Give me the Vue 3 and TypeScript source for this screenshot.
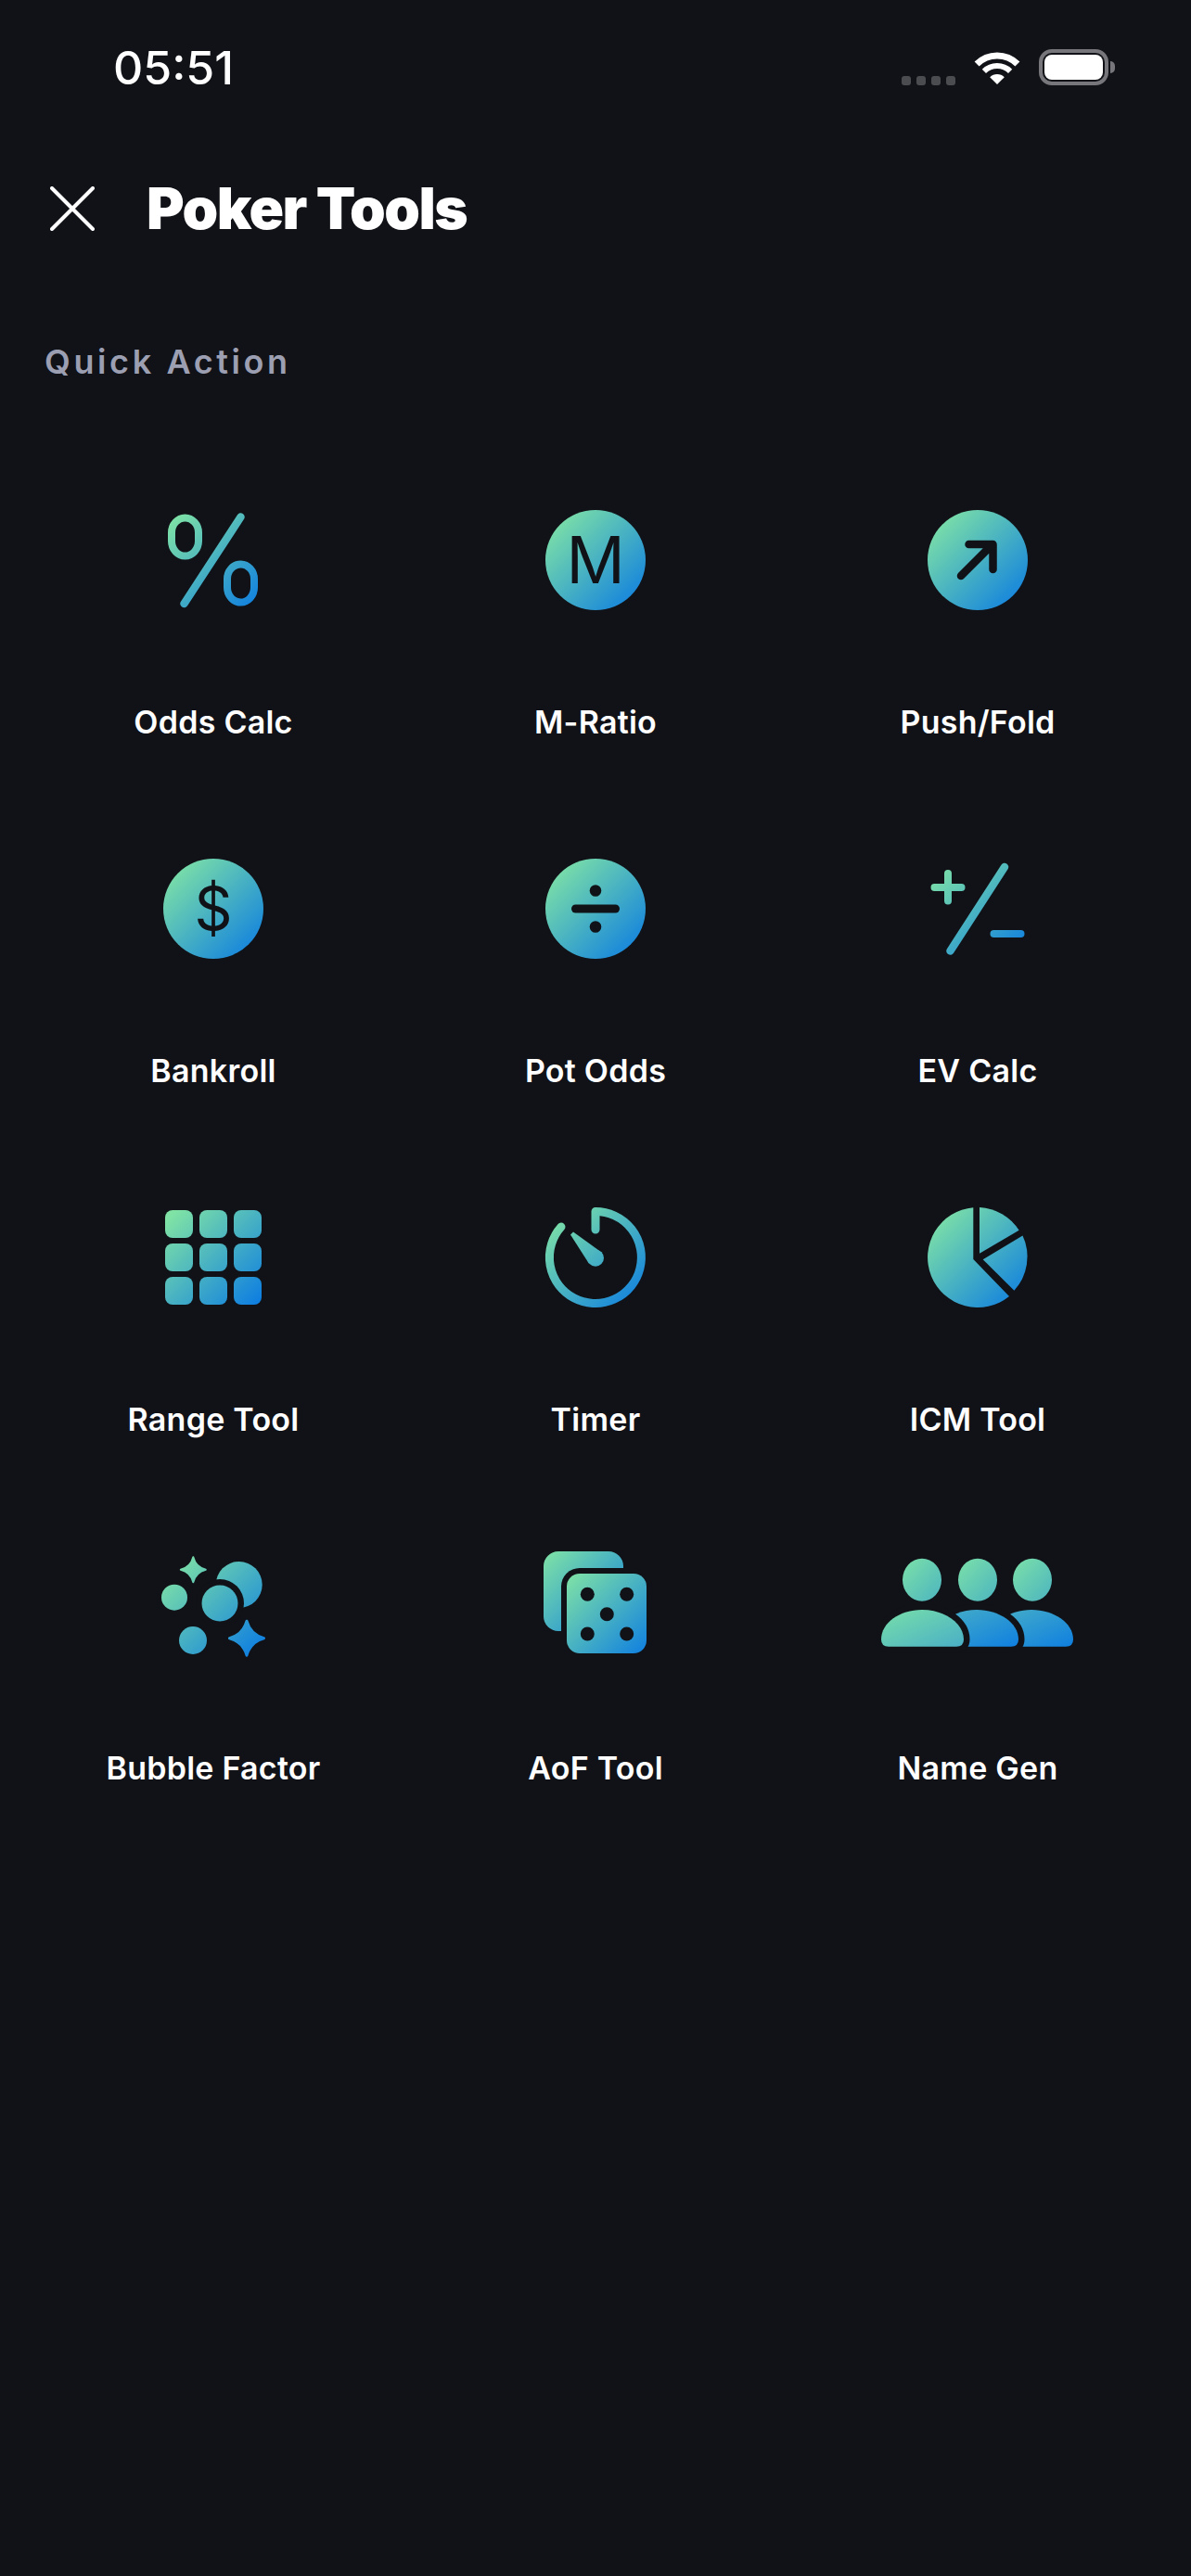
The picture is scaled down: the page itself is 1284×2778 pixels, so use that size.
<script setup lang="ts">
const bg = '#101217'
const dots = [0, 1, 2, 3]
const rangeCells = [0, 1, 2].flatMap(r => [0, 1, 2].map(c => ({ x: -52 + c * 37, y: -51 + r * 36 })))
const diceDots = [[-8.7, -12.7], [33.7, -12.7], [12.3, 8.7], [-8.7, 30], [33.7, 30]]
const body = 'M-96 43.7Q-104 43.7-104 36C-104 18-84 4-60 4C-36 4-15 18-15 36Q-15 43.7-23 43.7Z'
</script>

<template>
  <div class="page">
    <!-- shared gradients, coordinates are relative to each icon's centre -->
    <svg class="defs" width="0" height="0">
      <defs>
        <linearGradient id="g" gradientUnits="userSpaceOnUse" x1="-46" y1="-46" x2="48" y2="48">
          <stop offset="0" stop-color="#80e3a5" />
          <stop offset="1" stop-color="#0f7fe0" />
        </linearGradient>
        <linearGradient id="g-back" gradientUnits="userSpaceOnUse" x1="-56" y1="-59" x2="30" y2="27">
          <stop offset="0" stop-color="#80e3a5" />
          <stop offset="1" stop-color="#0f7fe0" />
        </linearGradient>
        <linearGradient id="g-front" gradientUnits="userSpaceOnUse" x1="-31" y1="-35" x2="55" y2="51">
          <stop offset="0" stop-color="#80e3a5" />
          <stop offset="1" stop-color="#0f7fe0" />
        </linearGradient>
        <linearGradient id="g-head" x1="0" y1="0" x2="1" y2="1">
          <stop offset="0" stop-color="#7ce1a8" />
          <stop offset="1" stop-color="#4cb4c0" />
        </linearGradient>
        <linearGradient id="g-body" x1="0" y1="0" x2="1" y2="1">
          <stop offset="0" stop-color="#78dfa9" />
          <stop offset="1" stop-color="#4aafc6" />
        </linearGradient>
        <linearGradient id="g-body2" x1="0" y1="0" x2="1" y2="1">
          <stop offset="0" stop-color="#48b0c6" />
          <stop offset="1" stop-color="#0f7fe0" />
        </linearGradient>
      </defs>
    </svg>

    <div class="status">
      <span class="time">05:51</span>
      <div class="status-icons">
        <div class="signal">
          <i v-for="d in dots" :key="d" />
        </div>
        <svg class="wifi" width="52" height="38" viewBox="0 0 52 38">
          <path d="M4.1 15.1A31 31 0 0 1 47.9 15.1" fill="none" stroke="#fff" stroke-width="7" />
          <path d="M11.9 22.9A20 20 0 0 1 40.1 22.9" fill="none" stroke="#fff" stroke-width="6" />
          <path d="M26 37L18.2 29.2A11 11 0 0 1 33.8 29.2Z" fill="#fff" />
        </svg>
        <div class="battery">
          <div class="battery-fill" />
        </div>
        <div class="battery-nub" />
      </div>
    </div>

    <div class="header">
      <svg width="48" height="48" viewBox="0 0 48 48">
        <path d="M2 2L46 46M46 2L2 46" fill="none" stroke="#fff" stroke-width="4" stroke-linecap="round" />
      </svg>
      <h1 class="title">Poker Tools</h1>
    </div>

    <div class="section">Quick Action</div>

    <div class="grid">
      <div class="tool">
        <svg class="icon" viewBox="-105 -65 210 130">
          <rect x="-45" y="-45.5" width="29" height="41" rx="14.5" ry="16" fill="none" stroke="url(#g)" stroke-width="8" />
          <rect x="15" y="4.5" width="29" height="41" rx="14.5" ry="16" fill="none" stroke="url(#g)" stroke-width="8" />
          <path d="M29.5 -46.5L-31.5 47" fill="none" stroke="url(#g)" stroke-width="8.5" stroke-linecap="round" />
        </svg>
        <span class="label">Odds Calc</span>
      </div>

      <div class="tool">
        <svg class="icon" viewBox="-105 -65 210 130">
          <circle r="54" fill="url(#g)" />
          <text class="glyph" y="25" font-size="70" text-anchor="middle" :fill="bg">M</text>
        </svg>
        <span class="label">M-Ratio</span>
      </div>

      <div class="tool">
        <svg class="icon" viewBox="-105 -65 210 130">
          <circle r="54" fill="url(#g)" />
          <path d="M-9.5 -17H16.5V10M14 -15L-18 17" fill="none" :stroke="bg" stroke-width="8.5" stroke-linecap="round" stroke-linejoin="round" />
        </svg>
        <span class="label">Push/Fold</span>
      </div>

      <div class="tool">
        <svg class="icon" viewBox="-105 -65 210 130">
          <circle r="54" fill="url(#g)" />
          <text class="glyph" y="23" font-size="64" text-anchor="middle" :fill="bg">$</text>
        </svg>
        <span class="label">Bankroll</span>
      </div>

      <div class="tool">
        <svg class="icon" viewBox="-105 -65 210 130">
          <circle r="54" fill="url(#g)" />
          <rect x="-26" y="-4.5" width="52" height="9" rx="4.5" :fill="bg" />
          <circle cy="-19.5" r="6.3" :fill="bg" />
          <circle cy="19.5" r="6.3" :fill="bg" />
        </svg>
        <span class="label">Pot Odds</span>
      </div>

      <div class="tool">
        <svg class="icon" viewBox="-105 -65 210 130">
          <path d="M-46.5 -23H-17.5M-32 -38V-8.5" fill="none" stroke="url(#g)" stroke-width="8" stroke-linecap="round" />
          <path d="M29 -45L-29.5 45.5" fill="none" stroke="url(#g)" stroke-width="8.5" stroke-linecap="round" />
          <path d="M17.5 27H46.5" fill="none" stroke="url(#g)" stroke-width="8" stroke-linecap="round" />
        </svg>
        <span class="label">EV Calc</span>
      </div>

      <div class="tool">
        <svg class="icon" viewBox="-105 -65 210 130">
          <rect v-for="(c, i) in rangeCells" :key="i" :x="c.x" :y="c.y" width="30" height="30" rx="8" fill="url(#g)" />
        </svg>
        <span class="label">Range Tool</span>
      </div>

      <div class="tool">
        <svg class="icon" viewBox="-105 -65 210 130">
          <path d="M0 -30V-49.5A49.5 49.5 0 1 1 -37 -33" fill="none" stroke="url(#g)" stroke-width="9" stroke-linecap="round" stroke-linejoin="round" />
          <path d="M-24 -27.4L-27 -24.6L-7 6.7L6.8 -5.3Z" fill="url(#g)" />
          <circle cy="0.7" r="9" fill="url(#g)" />
        </svg>
        <span class="label">Timer</span>
      </div>

      <div class="tool">
        <svg class="icon" viewBox="-105 -65 210 130">
          <path d="M-4.7 -53.8A54 54 0 1 0 34 42L-4.7 2Z" fill="url(#g)" />
          <path d="M2 -54A54 54 0 0 1 44.6 -29.3L2 -4.3Z" fill="url(#g)" />
          <path d="M48.5 -23.5A54 54 0 0 1 39.4 35.7L5.7 2.3Z" fill="url(#g)" />
        </svg>
        <span class="label">ICM Tool</span>
      </div>

      <div class="tool">
        <svg class="icon" viewBox="-105 -65 210 130">
          <path d="M-21.7 -52.8Q-19 -42 -8.2 -39.3Q-19 -36.6 -21.7 -25.8Q-24.4 -36.6 -35.2 -39.3Q-24.4 -42 -21.7 -52.8Z" fill="url(#g)" stroke="url(#g)" stroke-width="2" stroke-linejoin="round" />
          <circle cx="27.7" cy="-23" r="25" fill="url(#g)" />
          <circle cx="7" cy="-3" r="26" :fill="bg" />
          <circle cx="7" cy="-3" r="19.5" fill="url(#g)" />
          <circle cx="-42" cy="-9.3" r="14" fill="url(#g)" />
          <circle cx="-22" cy="37" r="15" fill="url(#g)" />
          <path d="M36 16.2Q40 30.7 54.5 34.7Q40 38.7 36 53.2Q32 38.7 17.5 34.7Q32 30.7 36 16.2Z" fill="url(#g)" stroke="url(#g)" stroke-width="3" stroke-linejoin="round" />
        </svg>
        <span class="label">Bubble Factor</span>
      </div>

      <div class="tool">
        <svg class="icon" viewBox="-105 -65 210 130">
          <rect x="-56" y="-59" width="86" height="86" rx="16" fill="url(#g-back)" />
          <rect x="-37" y="-41" width="98" height="98" rx="20" :fill="bg" />
          <rect x="-31" y="-35" width="86" height="86" rx="14" fill="url(#g-front)" />
          <circle v-for="(d, i) in diceDots" :key="i" :cx="d[0]" :cy="d[1]" r="7.5" :fill="bg" />
        </svg>
        <span class="label">AoF Tool</span>
      </div>

      <div class="tool">
        <svg class="icon" viewBox="-105 -65 210 130">
          <path :d="body" transform="translate(118 0)" fill="url(#g-body2)" />
          <path :d="body" transform="translate(59 0)" :fill="bg" :stroke="bg" stroke-width="13" />
          <path :d="body" transform="translate(59 0)" fill="url(#g-body2)" />
          <path :d="body" :fill="bg" :stroke="bg" stroke-width="13" />
          <path :d="body" fill="url(#g-body)" />
          <ellipse cx="-60" cy="-28.3" rx="21" ry="23" fill="url(#g-head)" />
          <ellipse cx="0" cy="-28.3" rx="21" ry="23" fill="url(#g-head)" />
          <ellipse cx="59" cy="-28.3" rx="21" ry="23" fill="url(#g-head)" />
        </svg>
        <span class="label">Name Gen</span>
      </div>
    </div>
  </div>
</template>

<style scoped>
.page {
  min-height: 2778px;
  background: #101217;
  color: #fff;
  font-family: Inter, "Liberation Sans", sans-serif;
}

.defs {
  display: block;
}

.status {
  height: 146px;
  padding: 52px 82px 0 122px;
  box-sizing: border-box;
  display: flex;
  justify-content: space-between;
  align-items: flex-start;
}

.time {
  font-size: 50px;
  line-height: 42px;
  font-weight: 550;
}

.status-icons {
  display: flex;
  align-items: flex-end;
  height: 40px;
}

.signal {
  display: flex;
  gap: 6px;
  margin-right: 19px;
}

.signal i {
  display: block;
  width: 10px;
  height: 10px;
  border-radius: 3px;
  background: #4b4c50;
}

.wifi {
  margin-right: 19px;
}

.battery {
  width: 75px;
  height: 39px;
  box-sizing: border-box;
  border: 4px solid #77777b;
  border-radius: 14px;
  padding: 2px;
}

.battery-fill {
  height: 100%;
  background: #fff;
  border-radius: 8px;
}

.battery-nub {
  width: 5px;
  height: 13px;
  margin: 0 0 13px 2px;
  background: #77777b;
  border-radius: 0 6px 6px 0;
}

.header {
  margin-top: 34px;
  height: 90px;
  padding-left: 54px;
  display: flex;
  align-items: center;
  gap: 56px;
}

.title {
  margin: 0;
  font-size: 62px;
  line-height: 90px;
  font-weight: 900;
  letter-spacing: -1.5px;
}

.section {
  margin-top: 100px;
  padding-left: 48px;
  font-size: 36px;
  line-height: 40px;
  font-weight: 600;
  letter-spacing: 3.6px;
  color: #9c9fb2;
}

.grid {
  margin-top: 129px;
  padding: 0 24px;
  display: grid;
  grid-template-columns: repeat(3, 1fr);
  row-gap: 114px;
}

.tool {
  display: flex;
  flex-direction: column;
  align-items: center;
}

.icon {
  display: block;
  width: 210px;
  height: 130px;
}

.glyph {
  font-family: Inter, "Liberation Sans", sans-serif;
  font-weight: 400;
}

.label {
  margin-top: 88px;
  font-size: 34px;
  line-height: 44px;
  font-weight: 600;
  letter-spacing: 0.25px;
}
</style>

<style>
body {
  background: #101217;
}
</style>
